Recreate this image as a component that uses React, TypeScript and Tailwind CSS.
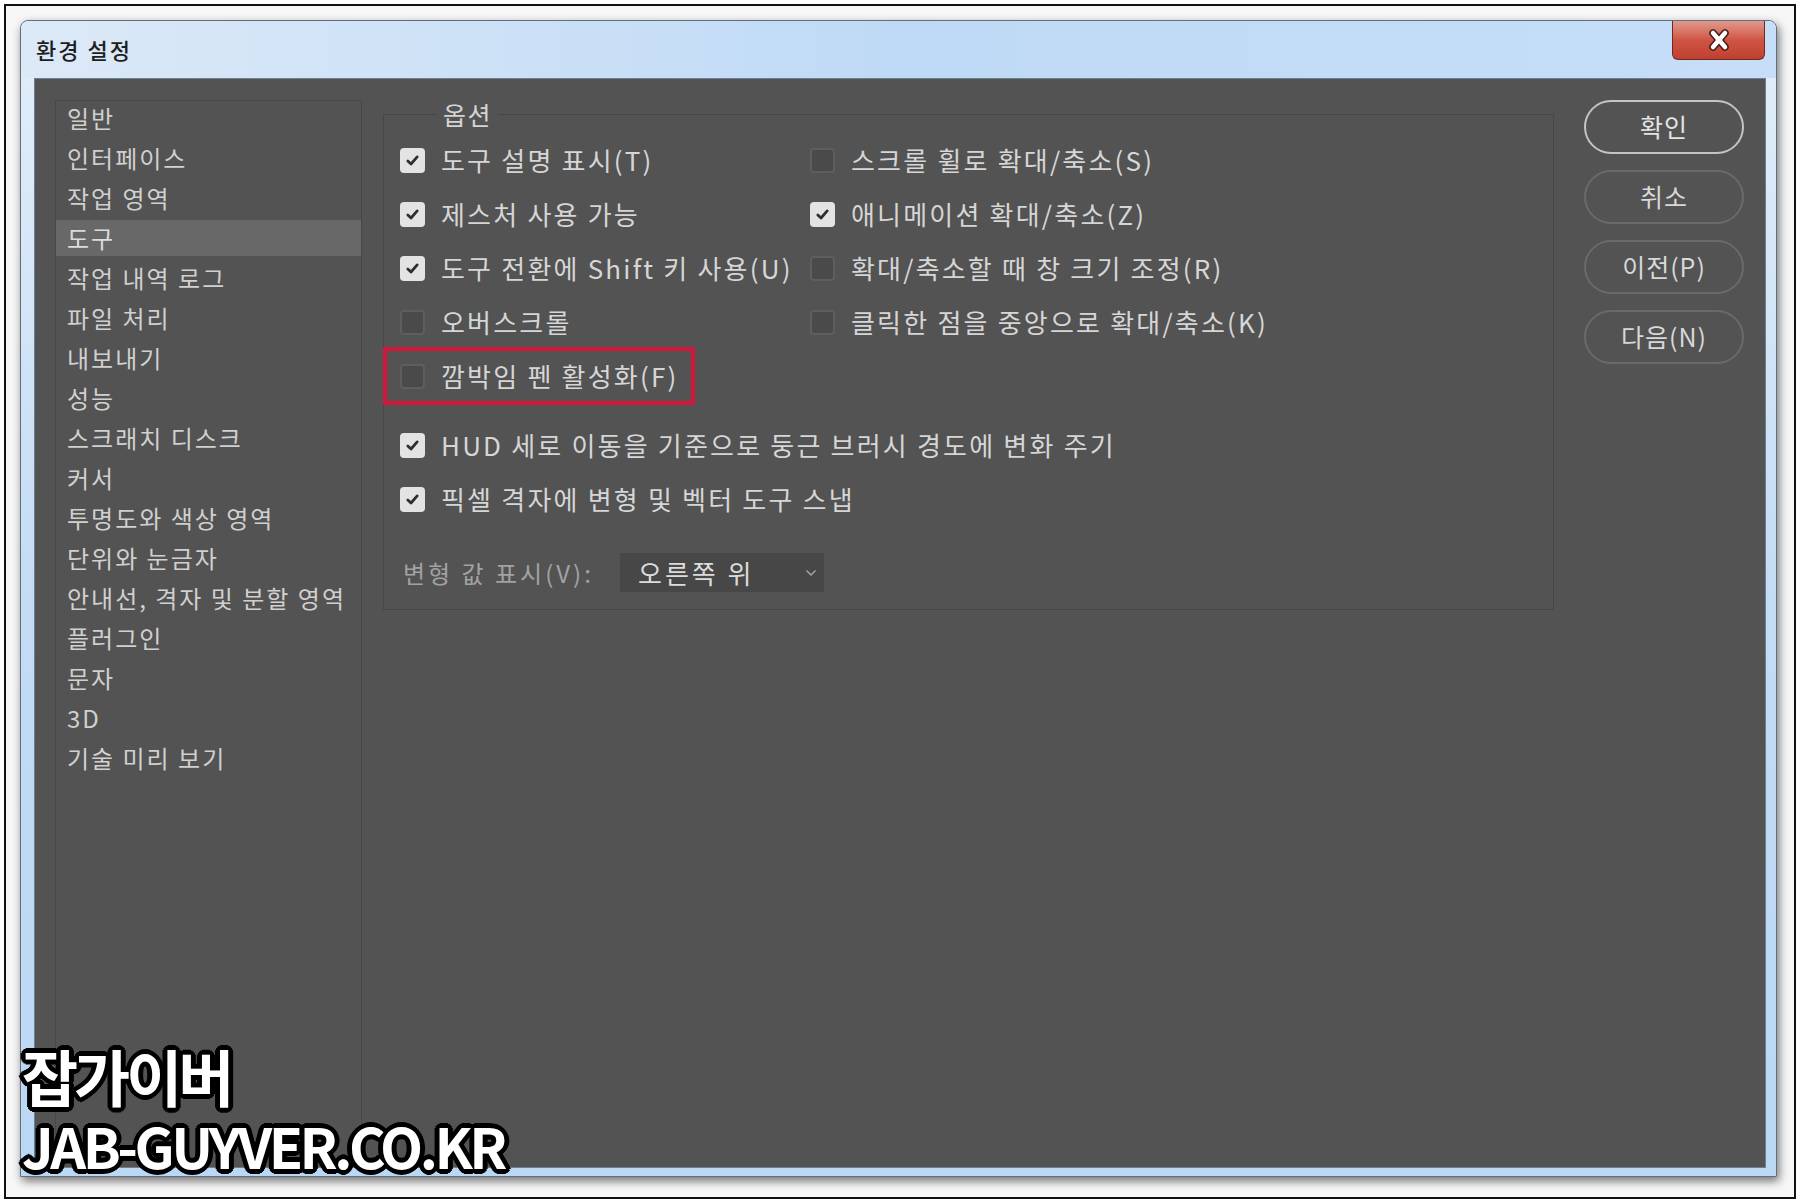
import React from "react";

const sidebarItems = [
  "일반",
  "인터페이스",
  "작업 영역",
  "도구",
  "작업 내역 로그",
  "파일 처리",
  "내보내기",
  "성능",
  "스크래치 디스크",
  "커서",
  "투명도와 색상 영역",
  "단위와 눈금자",
  "안내선, 격자 및 분할 영역",
  "플러그인",
  "문자",
  "3D",
  "기술 미리 보기",
];

function CheckBox({ checked }: { checked: boolean }) {
  if (checked) {
    return (
      <span className="w-[25px] h-[25px] rounded-[4px] bg-[#e3e3e3] flex items-center justify-center shrink-0">
        <svg width="17" height="17" viewBox="0 0 16 16">
          <path
            d="M3.6 8.4 L6.6 11.3 L12.4 4.6"
            fill="none"
            stroke="#2f2f2f"
            strokeWidth="2.6"
            strokeLinecap="round"
            strokeLinejoin="round"
          />
        </svg>
      </span>
    );
  }
  return <span className="w-[25px] h-[25px] rounded-[4px] bg-[#4a4a4a] border-2 border-[#5e5e5e] shrink-0" />;
}

function Opt({ checked, label }: { checked: boolean; label: string }) {
  return (
    <div className="flex items-center gap-[16px] h-[54px] whitespace-nowrap">
      <CheckBox checked={checked} />
      <span className="text-[26px] leading-none tracking-[2.2px] text-[#d6d6d6]">{label}</span>
    </div>
  );
}

function Btn({ label, primary }: { label: string; primary?: boolean }) {
  return (
    <div
      className={
        primary
          ? "w-[160px] h-[54px] rounded-full border-2 border-[#c4c4c4] flex items-center justify-center text-[25px] tracking-[1px] text-[#e4e4e4]"
          : "w-[160px] h-[54px] rounded-full border-2 border-[#6a6a6a] flex items-center justify-center text-[25px] tracking-[1px] text-[#d8d8d8]"
      }
    >
      {label}
    </div>
  );
}

export default function App() {
  return (
    <div className="relative w-[1800px] h-[1202px] bg-white font-['Noto_Sans_CJK_KR','Noto_Sans',sans-serif] overflow-hidden">
      <div className="absolute left-[4px] top-[4px] w-[1792px] h-[1195px] border-2 border-[#111] bg-[#f7f7f7]">
        {/* window */}
        <div className="ml-[14px] mt-[14px] w-[1757px] h-[1157px] rounded-t-[8px] border border-[#5f6f80] bg-gradient-to-b from-[#e3eef9] via-[#c4dcf4] to-[#bad7f4] shadow-[2px_4px_10px_rgba(0,0,0,0.55)] flex flex-col">
          {/* title bar */}
          <div className="h-[57px] flex justify-between bg-gradient-to-r from-[#dce9f7] via-[#bfdaf6] to-[#c6def7] rounded-t-[8px]">
            <div className="pl-[15px] flex items-center text-[22px] font-medium text-[#1e1e1e] tracking-[2px]">환경 설정</div>
            <div className="mr-[11px] w-[93px] h-[39px] rounded-b-[6px] border border-t-0 border-[#6b2a22] bg-gradient-to-b from-[#e09a8e] via-[#cf5444] to-[#c0402f] flex items-center justify-center">
              <svg width="30" height="24" viewBox="0 0 30 24">
                <path d="M9 5 L21 19 M21 5 L9 19" stroke="#4a1a14" strokeWidth="7.5" strokeLinecap="round" />
                <path d="M9 5 L21 19 M21 5 L9 19" stroke="#ffffff" strokeWidth="4.5" strokeLinecap="round" />
              </svg>
            </div>
          </div>
          {/* body frame */}
          <div className="flex-1 flex pl-[13px] pr-[11px] pb-[8px]">
            <div className="flex-1 bg-[#535353] border border-[#6e7f92] flex pl-[20px] pr-[21px] pt-[21px]">
              {/* sidebar */}
              <div className="w-[307px] border border-b-0 border-[#474747] flex flex-col">
                <div className="mt-[-3px] flex flex-col">
                  {sidebarItems.map((s) => (
                    <div
                      key={s}
                      className={
                        s === "도구"
                          ? "h-[36px] my-[2px] flex items-center pl-[11px] bg-[#686868] text-[24px] leading-none text-[#dcdcdc] tracking-[2px] whitespace-nowrap"
                          : "h-[36px] my-[2px] flex items-center pl-[11px] text-[24px] leading-none text-[#d0d0d0] tracking-[2px] whitespace-nowrap"
                      }
                    >
                      {s}
                    </div>
                  ))}
                </div>
              </div>
              {/* options group */}
              <fieldset className="ml-[21px] w-[1171px] self-start border border-[#474747] pl-[16px] pb-[17px] pt-[5px] m-0">
                <legend className="ml-[37px] px-[6px] text-[25px] leading-[28px] tracking-[1.5px] text-[#d4d4d4]">옵션</legend>
                <div className="grid grid-cols-[410px_1fr]">
                  <Opt checked label="도구 설명 표시(T)" />
                  <Opt checked={false} label="스크롤 휠로 확대/축소(S)" />
                  <Opt checked label="제스처 사용 가능" />
                  <Opt checked label="애니메이션 확대/축소(Z)" />
                  <Opt checked label="도구 전환에 Shift 키 사용(U)" />
                  <Opt checked={false} label="확대/축소할 때 창 크기 조정(R)" />
                  <Opt checked={false} label="오버스크롤" />
                  <Opt checked={false} label="클릭한 점을 중앙으로 확대/축소(K)" />
                  <div className="relative">
                    <Opt checked={false} label="깜박임 펜 활성화(F)" />
                    <div className="absolute left-[-17px] top-[-2px] w-[312px] h-[58px] border-[4px] border-[#d3163b] pointer-events-none" />
                  </div>
                  <div />
                </div>
                <div className="mt-[15px]">
                  <Opt checked label="HUD 세로 이동을 기준으로 둥근 브러시 경도에 변화 주기" />
                  <Opt checked label="픽셀 격자에 변형 및 벡터 도구 스냅" />
                </div>
                <div className="mt-[27px] flex items-center h-[39px]">
                  <span className="ml-[3px] w-[217px] text-[24px] leading-none tracking-[3px] text-[#a2a2a2] whitespace-nowrap">변형 값 표시(V):</span>
                  <div className="w-[204px] h-[39px] bg-[#474747] flex items-center justify-between pl-[18px] pr-[7px]">
                    <span className="text-[26px] leading-none tracking-[3px] text-[#dcdcdc]">오른쪽 위</span>
                    <svg width="12" height="8" viewBox="0 0 12 8">
                      <path d="M1.5 1.5 L6 6 L10.5 1.5" fill="none" stroke="#a8a8a8" strokeWidth="1.4" />
                    </svg>
                  </div>
                </div>
              </fieldset>
              {/* buttons */}
              <div className="ml-[30px] flex flex-col gap-[16px]">
                <Btn label="확인" primary />
                <Btn label="취소" />
                <Btn label="이전(P)" />
                <Btn label="다음(N)" />
              </div>
            </div>
          </div>
        </div>
      </div>
      {/* watermark */}
      <div className="absolute left-[22px] top-[1040px] flex flex-col gap-[4px] font-bold text-white leading-none [text-shadow:0_0_3px_#000,4px_0_0_#000,-4px_0_0_#000,0_4px_0_#000,0_-4px_0_#000,3px_3px_0_#000,-3px_-3px_0_#000,3px_-3px_0_#000,-3px_3px_0_#000,2px_4px_0_#000,-2px_4px_0_#000,2px_-4px_0_#000,-2px_-4px_0_#000,4px_2px_0_#000,-4px_2px_0_#000,4px_-2px_0_#000,-4px_-2px_0_#000,5px_0_0_#000,-5px_0_0_#000,0_5px_0_#000,0_-5px_0_#000]">
        <span className="text-[61px] tracking-[-4px] h-[70px] flex items-center">잡가이버</span>
        <span className="text-[56px] tracking-[-3.5px] h-[62px] flex items-center">JAB-GUYVER.CO.KR</span>
      </div>
    </div>
  );
}
